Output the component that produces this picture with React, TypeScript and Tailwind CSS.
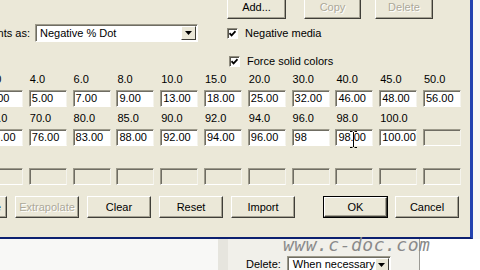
import clsx from 'clsx';

const row1Labels = ['2.0', '4.0', '6.0', '8.0', '10.0', '15.0', '20.0', '30.0', '40.0', '45.0', '50.0'];
const row1Values = ['3.00', '5.00', '7.00', '9.00', '13.00', '18.00', '25.00', '32.00', '46.00', '48.00', '56.00'];
const row2Labels = ['60.0', '70.0', '80.0', '85.0', '90.0', '92.0', '94.0', '96.0', '98.0', '100.0', ''];
const row2Values: (string | null)[] = ['68.00', '76.00', '83.00', '88.00', '92.00', '94.00', '96.00', '98', '98.00', '100.00', null];

function Btn({ label, disabled, isDefault, className }: { label: string; disabled?: boolean; isDefault?: boolean; className?: string }) {
  const face = (
    <div
      className={clsx(
        'flex items-center justify-center w-full h-full bg-[#ebe8d8] border border-t-white border-l-white border-b-[#3f3e38] border-r-[#3f3e38] shadow-[inset_-1px_-1px_0_#a5a293]',
        disabled ? 'text-[#aca899] [text-shadow:1px_1px_0_#ffffff]' : 'text-black'
      )}
    >
      {label}
    </div>
  );
  if (isDefault) {
    return <div className={clsx('border border-black shrink-0', className)}>{face}</div>;
  }
  return <div className={clsx('shrink-0', className)}>{face}</div>;
}

function Field({ value, enabled }: { value?: string | null; enabled: boolean }) {
  return (
    <div
      className={clsx(
        'h-[17px] w-full flex items-center pl-[2px] whitespace-nowrap overflow-hidden border border-t-[#9d9a8b] border-l-[#9d9a8b] border-b-white border-r-[#f4f3ec] shadow-[inset_1px_1px_0_#6f6d63]',
        enabled ? 'bg-white' : 'bg-[#ebe8d8]'
      )}
    >
      {value}
    </div>
  );
}

function Check({ label }: { label: string }) {
  return (
    <div className="flex items-center gap-[7px] h-[13px]">
      <div className="w-[11px] h-[11px] bg-white border border-t-[#8e8b7d] border-l-[#8e8b7d] border-b-white border-r-white shadow-[inset_1px_1px_0_#55534b] flex items-center justify-center">
        <svg width="7" height="7" viewBox="0 0 7 7">
          <polyline points="0.5,3.2 2.6,5.4 6.5,1.2" fill="none" stroke="#000" strokeWidth="1.7" />
        </svg>
      </div>
      <span>{label}</span>
    </div>
  );
}

function DropArrow() {
  return (
    <div className="w-[15px] h-full bg-[#ebe8d8] border border-t-white border-l-white border-b-[#3f3e38] border-r-[#3f3e38] flex items-center justify-center">
      <svg width="7" height="4" viewBox="0 0 7 4">
        <polygon points="0,0 7,0 3.5,4" fill="#000" />
      </svg>
    </div>
  );
}

export default function App() {
  return (
    <div className="w-[480px] h-[270px] overflow-hidden relative bg-[#f8f8f6] text-[11px] leading-[13px] text-black font-['Liberation_Sans',Arial,sans-serif]">
      <div className="w-[473px] h-[239px] bg-[#ebe8d8] border-r-[3px] border-r-[#2443b0] border-b-[2px] border-b-[#0c2070] shadow-[0_1px_0_#8ea6e6] flex flex-col">
        {/* top area */}
        <div className="flex h-[72px] shrink-0">
          <div className="w-[227px] flex items-center h-[18px] mt-[24px]">
            <div className="w-[30px] flex justify-end overflow-hidden whitespace-nowrap">Show points as:</div>
            <div className="ml-[5px] w-[163px] h-[18px] bg-white flex items-center border border-t-[#9d9a8b] border-l-[#9d9a8b] border-b-white border-r-white shadow-[inset_1px_1px_0_#6f6d63] p-[1px]">
              <span className="flex-1 pl-[3px]">Negative % Dot</span>
              <DropArrow />
            </div>
          </div>
          <div className="flex flex-col">
            <div className="flex -mt-[5px] h-[24px]">
              <Btn label="Add..." className="w-[59px] h-[24px]" />
              <Btn label="Copy" disabled className="ml-[18px] w-[57px] h-[24px]" />
              <Btn label="Delete" disabled className="ml-[14px] w-[58px] h-[24px]" />
            </div>
            <div className="mt-[8px]">
              <Check label="Negative media" />
            </div>
            <div className="mt-[15px] ml-[2px]">
              <Check label="Force solid colors" />
            </div>
          </div>
        </div>

        {/* grid of values */}
        <div className="-ml-[15px] grid grid-cols-[repeat(11,38px)] gap-x-[5.8px] gap-y-[4px]">
          {row1Labels.map((l, i) => (
            <div key={'a' + i} className="flex flex-col">
              <div className="h-[14px] pt-[1px] pl-[1px] whitespace-nowrap">{l}</div>
              <div className="mt-[4px]">
                <Field value={row1Values[i]} enabled />
              </div>
            </div>
          ))}
          {row2Labels.map((l, i) => (
            <div key={'b' + i} className="flex flex-col">
              <div className="h-[14px] pt-[1px] pl-[1px] whitespace-nowrap">{l}</div>
              <div className="mt-[4px]">
                <Field value={row2Values[i]} enabled={row2Values[i] !== null} />
              </div>
            </div>
          ))}
          {row1Labels.map((_, i) => (
            <div key={'c' + i} className="flex flex-col">
              <div className="h-[14px]" />
              <div className="mt-[4px]">
                <Field enabled={false} />
              </div>
            </div>
          ))}
        </div>

        {/* buttons */}
        <div className="flex mt-[11px] -ml-[57px] h-[22px]">
          <Btn label="Interpolate" className="w-[64px] h-[22px]" />
          <Btn label="Extrapolate" disabled className="ml-[8px] w-[64px] h-[22px]" />
          <Btn label="Clear" className="ml-[8px] w-[64px] h-[22px]" />
          <Btn label="Reset" className="ml-[8px] w-[64px] h-[22px]" />
          <Btn label="Import" className="ml-[8px] w-[64px] h-[22px]" />
          <Btn label="OK" isDefault className="ml-[28px] w-[65px] h-[22px]" />
          <Btn label="Cancel" className="ml-[7px] w-[64px] h-[22px]" />
        </div>
      </div>

      {/* window behind */}
      <div className="flex h-[31px]">
        <div className="w-[218px] bg-[#f8f8f6]" />
        <div className="w-[10px] bg-[#e6e5de]" />
        <div className="w-[192px] bg-[#f1f0ea] border-r border-r-[#9b9a94] flex items-end">
          <div className="flex items-start h-[12px] ml-[18px]">
            <span>Delete:</span>
            <div className="ml-[6px] w-[104px] h-[17px] bg-white flex items-center border border-t-[#9d9a8b] border-l-[#9d9a8b] border-b-white border-r-white shadow-[inset_1px_1px_0_#6f6d63] p-[1px] -mt-[2px]">
              <span className="flex-1 pl-[4px] whitespace-nowrap">When necessary</span>
              <DropArrow />
            </div>
          </div>
        </div>
        <div className="flex-1 bg-white" />
      </div>

      {/* watermark */}
      <div className="absolute left-[283px] top-[235px] text-[18px] leading-[20px] italic tracking-[0.5px] text-[#8a8a8a] font-['DejaVu_Sans_Mono',monospace] whitespace-nowrap">
        www.c-doc.com
      </div>

      {/* text cursor */}
      <svg className="absolute left-[350px] top-[131px]" width="7" height="17" viewBox="0 0 7 17">
        <path d="M0 0.5H2.5M4.5 0.5H7M3.5 1V16M0 16.5H2.5M4.5 16.5H7" stroke="#000" strokeWidth="1" fill="none" />
      </svg>
    </div>
  );
}
